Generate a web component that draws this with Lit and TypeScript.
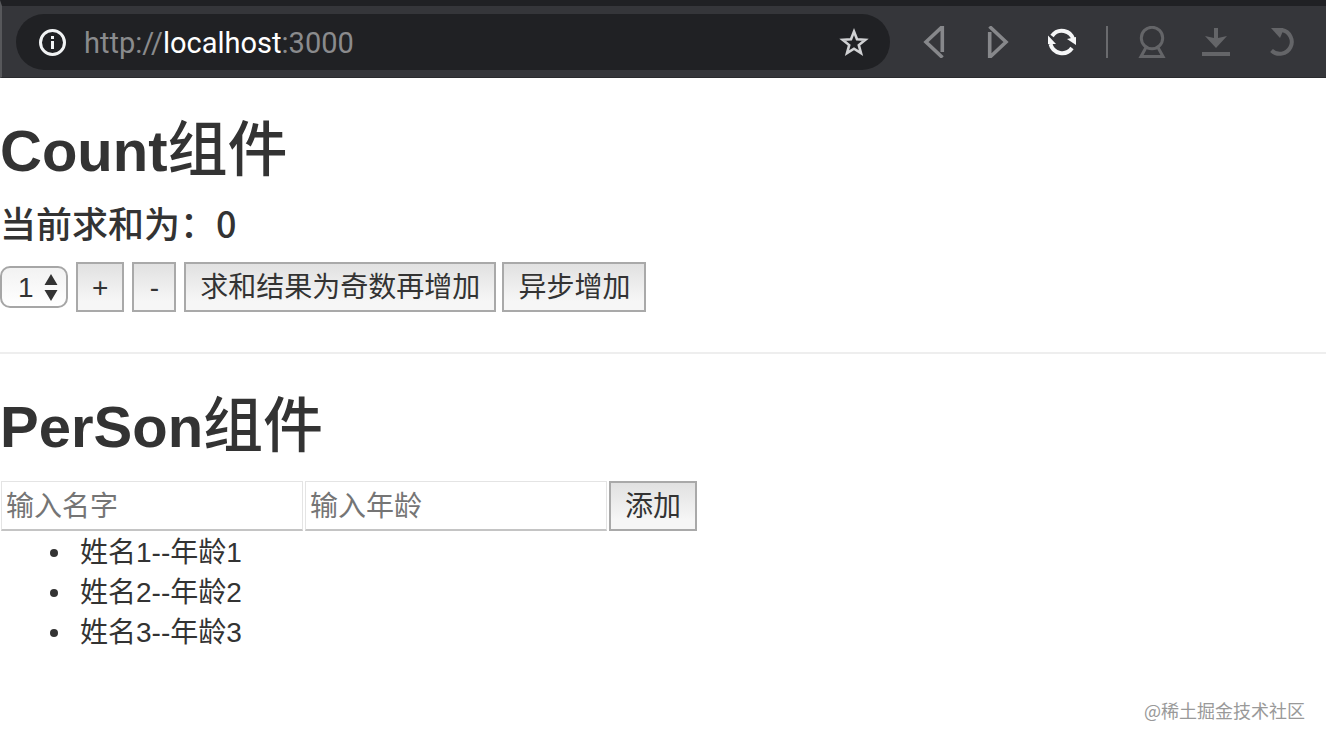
import { LitElement, html, css } from "lit";
import { customElement, state } from "lit/decorators.js";

const base = css`
  :host {
    display: block;
  }
  * {
    box-sizing: border-box;
  }
  .title {
    margin: 0 0 20px;
    font-size: 58px;
    line-height: 66px;
    font-weight: 600;
  }
  .cjk {
    font-size: 60px;
    line-height: 60px;
    font-weight: 500;
  }
  .btn {
    height: 50px;
    min-width: 44px;
    margin: 0;
    padding: 2px 14px 0;
    border: 2px solid #a9a9a9;
    border-radius: 0;
    background: linear-gradient(#e1e1e1, #f6f6f6 80%);
    color: #333;
    font: inherit;
    line-height: 40px;
  }
`;

@customElement("browser-bar")
export class BrowserBar extends LitElement {
  static styles = css`
    :host {
      display: block;
    }
    * {
      box-sizing: border-box;
    }
    .bar {
      display: flex;
      align-items: center;
      height: 78px;
      padding: 8px 30px 7px 14px;
      border-top: 6px solid #202124;
      border-bottom: 1px solid #2a2b2e;
      border-left: 2px solid #57585b;
      background: #35363a;
    }
    .address {
      display: flex;
      flex: 1;
      align-items: center;
      height: 56px;
      padding: 0 20px;
      border-radius: 28px;
      background: #202124;
    }
    .url {
      flex: 1;
      min-width: 0;
      margin-left: 16px;
      padding-top: 2px;
      color: #8a8b8d;
      font-family: Roboto, sans-serif;
      font-size: 29px;
      line-height: 40px;
    }
    .host {
      color: #fff;
    }
    .tools {
      display: flex;
      align-items: center;
      gap: 32px;
      margin-left: 28px;
    }
    .tool {
      display: block;
      width: 32px;
      height: 32px;
      padding: 0;
      border: 0;
      background: none;
    }
    .divider {
      width: 2px;
      height: 32px;
      margin: 0 -4px;
      background: #6a6b6e;
    }
    svg {
      display: block;
    }
  `;

  render() {
    return html`
      <header class="bar">
        <div class="address">
          <svg width="32" height="32" viewBox="0 0 32 32" fill="none">
            <circle cx="16.5" cy="16.5" r="12" stroke="#f1f3f4" stroke-width="3" />
            <path d="M15 10h3v3h-3zM15 15h3v8h-3z" fill="#f1f3f4" />
          </svg>
          <span class="url">http://<span class="host">localhost</span>:3000</span>
          <button class="tool" aria-label="Bookmark">
            <svg width="32" height="32" viewBox="0 0 32 32" fill="none">
              <path d="M16 5.5l3 7.8 8.3.5-6.5 5.3 2.2 8.1-7-4.5-7 4.5 2.2-8.1-6.5-5.3 8.3-.5z" stroke="#d0d1d3" stroke-width="2.6" />
            </svg>
          </button>
        </div>
        <nav class="tools">
          <button class="tool" aria-label="Back">
            <svg width="32" height="32" viewBox="0 0 32 32" fill="none">
              <path d="M24.5 0.5L8 16l16.5 15.5M24.3 0v26" stroke="#87888b" stroke-width="3.6" />
            </svg>
          </button>
          <button class="tool" aria-label="Forward">
            <svg width="32" height="32" viewBox="0 0 32 32" fill="none">
              <path d="M7.5 0.5L24 16 7.5 31.5M7.7 32V6" stroke="#87888b" stroke-width="3.6" />
            </svg>
          </button>
          <button class="tool" aria-label="Reload">
            <svg width="32" height="32" viewBox="0 0 32 32" fill="none">
              <path d="M6 10A12 12 0 0 1 27.5 14M26 22A12 12 0 0 1 4.5 18" stroke="#f5f6f7" stroke-width="4" />
              <path d="M30 11v8l-9-6zM2 9.5L10 18H2z" fill="#f5f6f7" />
            </svg>
          </button>
          <span class="divider"></span>
          <button class="tool" aria-label="Profile">
            <svg width="32" height="32" viewBox="0 0 32 32" fill="none" stroke="#646568" stroke-width="3">
              <circle cx="16" cy="12" r="10.7" />
              <path d="M10 21.5L5 30.4h22L22 21.5" />
            </svg>
          </button>
          <button class="tool" aria-label="Download">
            <svg width="32" height="32" viewBox="0 0 32 32" fill="#646568">
              <path d="M14 2h4v10l9-2-11 12L5 10l9 2zM2 26h28v4H2z" />
            </svg>
          </button>
          <button class="tool" aria-label="Undo">
            <svg width="32" height="32" viewBox="0 0 32 32" fill="none">
              <path d="M13 4h5a12 12 0 1 1-10.500 20.500" stroke="#646568" stroke-width="4" />
              <path d="M7 2h12v3l-3 7z" fill="#646568" />
            </svg>
          </button>
        </nav>
      </header>
    `;
  }
}

@customElement("count-panel")
export class CountPanel extends LitElement {
  static styles = [
    base,
    css`
      .sum {
        margin: 0 0 22px;
        font-size: 36px;
        line-height: 36px;
        font-weight: 500;
        font-family: "Noto Sans CJK SC", sans-serif;
      }
      .controls {
        display: flex;
        align-items: center;
        gap: 8px;
      }
      .pair {
        display: flex;
        gap: 6px;
      }
      .picker {
        position: relative;
      }
      .select {
        display: block;
        appearance: none;
        width: 68px;
        height: 42px;
        margin: 0;
        padding: 0 0 0 16px;
        border: 2px solid #a6a6a6;
        border-radius: 10px;
        background: linear-gradient(#f2f2f2, #fff);
        color: #333;
        font: inherit;
      }
      .arrows {
        position: absolute;
        right: 10px;
        top: 8px;
        pointer-events: none;
      }
    `,
  ];

  @state() private sum = 0;
  @state() private step = 1;

  private add(n: number) {
    this.sum += n;
  }

  render() {
    return html`
      <h2 class="title">Count<span class="cjk">组件</span></h2>
      <h4 class="sum">当前求和为：${this.sum}</h4>
      <div class="controls">
        <div class="picker">
          <select class="select" aria-label="步长" @change=${(e: Event) => (this.step = Number((e.target as HTMLSelectElement).value))}>
            <option value="1">1</option>
            <option value="2">2</option>
            <option value="3">3</option>
          </select>
          <svg class="arrows" width="14" height="27" viewBox="0 0 14 27" fill="#333">
            <path d="M7 0l6.5 11H.5zM7 27l6.5-11H.5z" />
          </svg>
        </div>
        <button class="btn" @click=${() => this.add(this.step)}>+</button>
        <button class="btn" @click=${() => this.add(-this.step)}>-</button>
        <div class="pair">
          <button class="btn" @click=${() => this.sum % 2 && this.add(this.step)}>求和结果为奇数再增加</button>
          <button class="btn" @click=${() => setTimeout(() => this.add(this.step), 500)}>异步增加</button>
        </div>
      </div>
    `;
  }
}

@customElement("person-panel")
export class PersonPanel extends LitElement {
  static styles = [
    base,
    css`
      .form {
        display: flex;
        align-items: center;
        gap: 2px;
        padding: 1px 0 0 1px;
      }
      .field {
        width: 302px;
        height: 50px;
        margin: 0;
        padding: 3px 4px 0;
        border: 1px solid #e4e4e4;
        border-bottom: 2px solid #c4c4c4;
        border-radius: 0;
        background: #fff;
        color: #333;
        font: inherit;
      }
      .field::placeholder {
        color: #757575;
      }
      .list {
        margin: 2px 0 0;
        padding: 0 0 0 50px;
        line-height: 40px;
        list-style: none;
      }
      .item {
        display: flex;
        align-items: center;
        gap: 22px;
      }
      .item::before {
        content: "";
        width: 8px;
        height: 8px;
        border-radius: 50%;
        background: #333;
      }
    `,
  ];

  @state() private people = [1, 2, 3].map((n) => ({ name: `姓名${n}`, age: `年龄${n}` }));

  private add() {
    const [name, age] = Array.from(this.renderRoot.querySelectorAll("input"));
    this.people = [...this.people, { name: name.value, age: age.value }];
    name.value = age.value = "";
  }

  render() {
    return html`
      <h2 class="title">PerSon<span class="cjk">组件</span></h2>
      <div class="form">
        <input class="field" type="text" placeholder="输入名字" aria-label="输入名字" />
        <input class="field" type="text" placeholder="输入年龄" aria-label="输入年龄" />
        <button class="btn" @click=${this.add}>添加</button>
      </div>
      <ul class="list">
        ${this.people.map((p) => html`<li class="item">${p.name}--${p.age}</li>`)}
      </ul>
    `;
  }
}

@customElement("app-root")
export class AppRoot extends LitElement {
  static styles = css`
    :host {
      display: flex;
      flex-direction: column;
      min-height: 100vh;
      background: #fff;
      color: #333;
      font-family: "Liberation Sans", "Noto Sans CJK SC", sans-serif;
      font-size: 28px;
      line-height: 40px;
    }
    .page {
      flex: 1;
      padding-top: 40px;
    }
    .rule {
      margin: 40px 0;
      border: 0;
      border-top: 2px solid #eee;
    }
    .mark {
      padding: 0 21px 18px;
      color: #999;
      font-family: "Noto Sans CJK SC", sans-serif;
      font-size: 18px;
      font-weight: 400;
      line-height: 28px;
      text-align: right;
    }
  `;

  render() {
    return html`
      <browser-bar></browser-bar>
      <main class="page">
        <count-panel></count-panel>
        <hr class="rule" />
        <person-panel></person-panel>
      </main>
      <footer class="mark">@稀土掘金技术社区</footer>
    `;
  }
}
